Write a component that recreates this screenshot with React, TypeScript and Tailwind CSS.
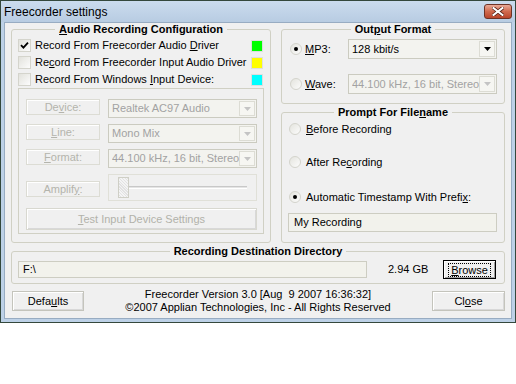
import React from "react";

function U({ children }: { children: React.ReactNode }) {
  return <span className="underline underline-offset-[1px]">{children}</span>;
}

function Group({
  title,
  className,
  children,
}: {
  title: React.ReactNode;
  className: string;
  children?: React.ReactNode;
}) {
  return (
    <fieldset className={`rounded-[3px] border border-[#d0d0c4] ${className}`}>
      <legend className="mx-auto px-[4px] text-[11px] font-bold leading-[12px]">{title}</legend>
      {children}
    </fieldset>
  );
}

function CheckBox({ checked }: { checked?: boolean }) {
  return (
    <span className="flex h-[13px] w-[13px] shrink-0 items-center justify-center border border-[#d4d4cc] bg-gradient-to-br from-[#e2e2dc] to-[#fcfcfc]">
      {checked && (
        <svg width="9" height="9" viewBox="0 0 9 9">
          <path d="M1 4.2 L3.4 6.6 L8 1.6" stroke="#000" strokeWidth="1.8" fill="none" />
        </svg>
      )}
    </span>
  );
}

function Radio({ on }: { on?: boolean }) {
  return (
    <span className="flex h-[12px] w-[12px] shrink-0 items-center justify-center rounded-full border border-[#d4d4cc] bg-gradient-to-br from-[#e4e4de] to-[#fcfcfc]">
      {on && <span className="h-[4px] w-[4px] rounded-full bg-black" />}
    </span>
  );
}

function Combo({ value, disabled, className }: { value: string; disabled?: boolean; className: string }) {
  return (
    <div
      className={`flex items-center border border-[#cbcbc0] bg-[#f3f3ef] pl-[3px] pr-[1px] ${className} ${
        disabled ? "text-[#a2a2a2]" : "text-black"
      }`}
    >
      <span className="flex-1 overflow-hidden whitespace-nowrap">{value}</span>
      <span className="flex h-[calc(100%-2px)] w-[16px] items-center justify-center border border-[#dcdcd4] bg-[#f6f6f2]">
        <svg width="7" height="4" viewBox="0 0 7 4">
          <path d="M0 0 H7 L3.5 4 Z" fill={disabled ? "#c4c4c4" : "#000"} />
        </svg>
      </span>
    </div>
  );
}

function LabelBox({ children, className = "" }: { children: React.ReactNode; className?: string }) {
  return (
    <div
      className={`flex h-[16px] w-[74px] shrink-0 items-center justify-center border border-[#dcdcd4] text-[#b4b4ac] shadow-[inset_1px_1px_0_#fff] ${className}`}
    >
      {children}
    </div>
  );
}

function Button({ children, className = "", focused }: { children: React.ReactNode; className?: string; focused?: boolean }) {
  return (
    <div
      className={`flex items-center justify-center bg-[#f0f0f0] ${
        focused
          ? "border border-black shadow-[inset_1px_1px_0_#fff,inset_-1px_-1px_0_#a0a0a0]"
          : "border border-[#c4c4bc] shadow-[inset_1px_1px_0_#fff,inset_-1px_-1px_0_#d8d8d8]"
      } ${className}`}
    >
      {focused ? (
        <span className="border border-dotted border-black px-[2px] leading-[12px]">{children}</span>
      ) : (
        children
      )}
    </div>
  );
}

function CheckRow({ label, checked, color }: { label: React.ReactNode; checked?: boolean; color: string }) {
  return (
    <div className="flex h-[17px] items-center pl-[6px] pr-[7px]">
      <CheckBox checked={checked} />
      <span className="ml-[4px] whitespace-nowrap">{label}</span>
      <span className={`ml-auto h-[12px] w-[12px] border border-[#dedede] ${color}`} />
    </div>
  );
}

export default function App() {
  return (
    <div className="h-[384px] w-[516px] bg-white font-['Liberation_Sans',Arial,sans-serif] text-[11px] text-black">
      <div className="flex h-[323px] w-[516px] flex-col border border-[#34483c] bg-[#bdd1e7]">
        {/* title bar */}
        <div className="flex h-[21px] shrink-0 items-center justify-between bg-gradient-to-b from-[#cbdcee] to-[#b8cce2] pl-[3px] pr-[3px]">
          <span className="text-[12px] text-black">Freecorder settings</span>
          <div className="flex h-[15px] w-[28px] items-center justify-center rounded-[3px] border border-[#6e3326] bg-gradient-to-b from-[#e9aa98] via-[#d06a4e] to-[#b9452b]">
            <svg width="12" height="9" viewBox="0 0 12 9">
              <path d="M1.5 1 L10.5 8 M10.5 1 L1.5 8" stroke="#5a2418" strokeWidth="3.6" strokeLinecap="square" />
              <path d="M1.5 1 L10.5 8 M10.5 1 L1.5 8" stroke="#fff" strokeWidth="2" strokeLinecap="square" />
            </svg>
          </div>
        </div>

        {/* client */}
        <div className="mx-[3px] mb-[3px] flex-1 border border-[#98acc2] bg-[#f0f0f0] pl-[6px]">
          <div className="flex">
            <Group
              className="h-[220px] w-[260px]"
              title={
                <>
                  <U>A</U>udio Recording Configuration
                </>
              }
            >
              <div className="pt-[2px]">
                <CheckRow
                  checked
                  color="bg-[#00ff00]"
                  label={
                    <>
                      Record From Freecorder Audio <U>D</U>river
                    </>
                  }
                />
                <CheckRow
                  color="bg-[#ffff00]"
                  label={
                    <>
                      Re<U>c</U>ord From Freecorder Input Audio Driver
                    </>
                  }
                />
                <CheckRow
                  color="bg-[#00ffff]"
                  label={
                    <>
                      Record From Windows <U>I</U>nput Device:
                    </>
                  }
                />
              </div>

              {/* disabled device panel */}
              <div className="ml-[6px] h-[146px] w-[246px] border border-[#d0d0c4] pl-[7px] pt-[10px]">
                <div className="flex items-start gap-[8px]">
                  <LabelBox>
                    De<U>v</U>ice:
                  </LabelBox>
                  <Combo disabled value="Realtek AC97 Audio" className="h-[19px] w-[149px]" />
                </div>
                <div className="mt-[6px] flex items-start gap-[8px]">
                  <LabelBox>
                    <U>L</U>ine:
                  </LabelBox>
                  <Combo disabled value="Mono Mix" className="h-[19px] w-[149px]" />
                </div>
                <div className="mt-[6px] flex items-start gap-[8px]">
                  <LabelBox>
                    <U>F</U>ormat:
                  </LabelBox>
                  <Combo disabled value="44.100 kHz, 16 bit, Stereo" className="h-[19px] w-[149px]" />
                </div>
                <div className="mt-[6px] flex items-start gap-[8px]">
                  <LabelBox className="mt-[7px]">
                    Amplif<U>y</U>:
                  </LabelBox>
                  <div className="relative flex h-[27px] w-[149px] items-center border border-[#e0e0d8] pl-[9px] pr-[9px]">
                    <div className="h-[21px] w-[11px] shrink-0 border border-[#cfcfc6] bg-[repeating-linear-gradient(45deg,#f4f4f4_0_1px,#e2e2e2_1px_2px)]" />
                    <div className="h-[3px] flex-1 border-y border-t-[#c8c8c8] border-b-white bg-[#e4e4e4]" />
                  </div>
                </div>
                <Button className="mt-[7px] h-[22px] w-[231px] !border-[#d8d8d0] text-[#b2b2aa]">
                  <span>
                    <U>T</U>est Input Device Settings
                  </span>
                </Button>
              </div>
            </Group>

            <div className="ml-[10px] flex w-[224px] flex-col">
              <Group
                className="h-[81px] w-[224px]"
                title={
                  <>
                    Out<U>p</U>ut Format
                  </>
                }
              >
                <div className="pl-[8px] pt-[4px]">
                  <div className="flex h-[20px] items-center">
                    <Radio on />
                    <span className="ml-[3px] w-[43px]">
                      <U>M</U>P3:
                    </span>
                    <Combo value="128 kbit/s" className="h-[20px] w-[149px]" />
                  </div>
                  <div className="mt-[15px] flex h-[20px] items-center">
                    <Radio />
                    <span className="ml-[3px] w-[43px]">
                      <U>W</U>ave:
                    </span>
                    <Combo disabled value="44.100 kHz, 16 bit, Stereo" className="h-[20px] w-[149px]" />
                  </div>
                </div>
              </Group>

              <Group
                className="mt-[2px] h-[137px] w-[224px]"
                title={
                  <>
                    Prompt For File<U>n</U>ame
                  </>
                }
              >
                <div className="pl-[7px] pt-[3px]">
                  <div className="flex h-[16px] items-center">
                    <Radio />
                    <span className="ml-[5px]">
                      <U>B</U>efore Recording
                    </span>
                  </div>
                  <div className="mt-[17px] flex h-[16px] items-center">
                    <Radio />
                    <span className="ml-[5px]">
                      After Re<U>c</U>ording
                    </span>
                  </div>
                  <div className="mt-[19px] flex h-[16px] items-center">
                    <Radio on />
                    <span className="ml-[5px]">
                      Automatic Timestamp With Prefi<U>x</U>:
                    </span>
                  </div>
                  <div className="-ml-[1px] mt-[8px] flex h-[19px] w-[209px] items-center border border-[#cdcdc2] bg-[#f2f2ec] pl-[5px]">
                    My Recording
                  </div>
                </div>
              </Group>
            </div>
          </div>

          <Group
            className="mt-[2px] h-[39px] w-[494px]"
            title={
              <>
                Recordin<U>g</U> Destination Directory
              </>
            }
          >
            <div className="flex items-center pl-[6px] pr-[8px] pt-[3px]">
              <div className="flex h-[17px] w-[349px] items-center border border-[#cdcdc2] bg-[#f2f2ec] pl-[4px]">
                F:\
              </div>
              <span className="ml-[21px]">2.94 GB</span>
              <Button focused className="ml-auto h-[19px] w-[53px]">
                <U>B</U>rowse
              </Button>
            </div>
          </Group>

          <div className="mt-[4px] flex h-[26px] w-[494px] items-center">
            <Button className="ml-[1px] h-[20px] w-[72px]">
              <span>
                Defa<U>u</U>lts
              </span>
            </Button>
            <div className="flex-1 text-center leading-[13px]">
              <div>Freecorder Version 3.0 [Aug&nbsp; 9 2007 16:36:32]</div>
              <div>©2007 Applian Technologies, Inc - All Rights Reserved</div>
            </div>
            <Button className="h-[20px] w-[73px]">
              <span>
                Cl<U>o</U>se
              </span>
            </Button>
          </div>
        </div>
      </div>
    </div>
  );
}
